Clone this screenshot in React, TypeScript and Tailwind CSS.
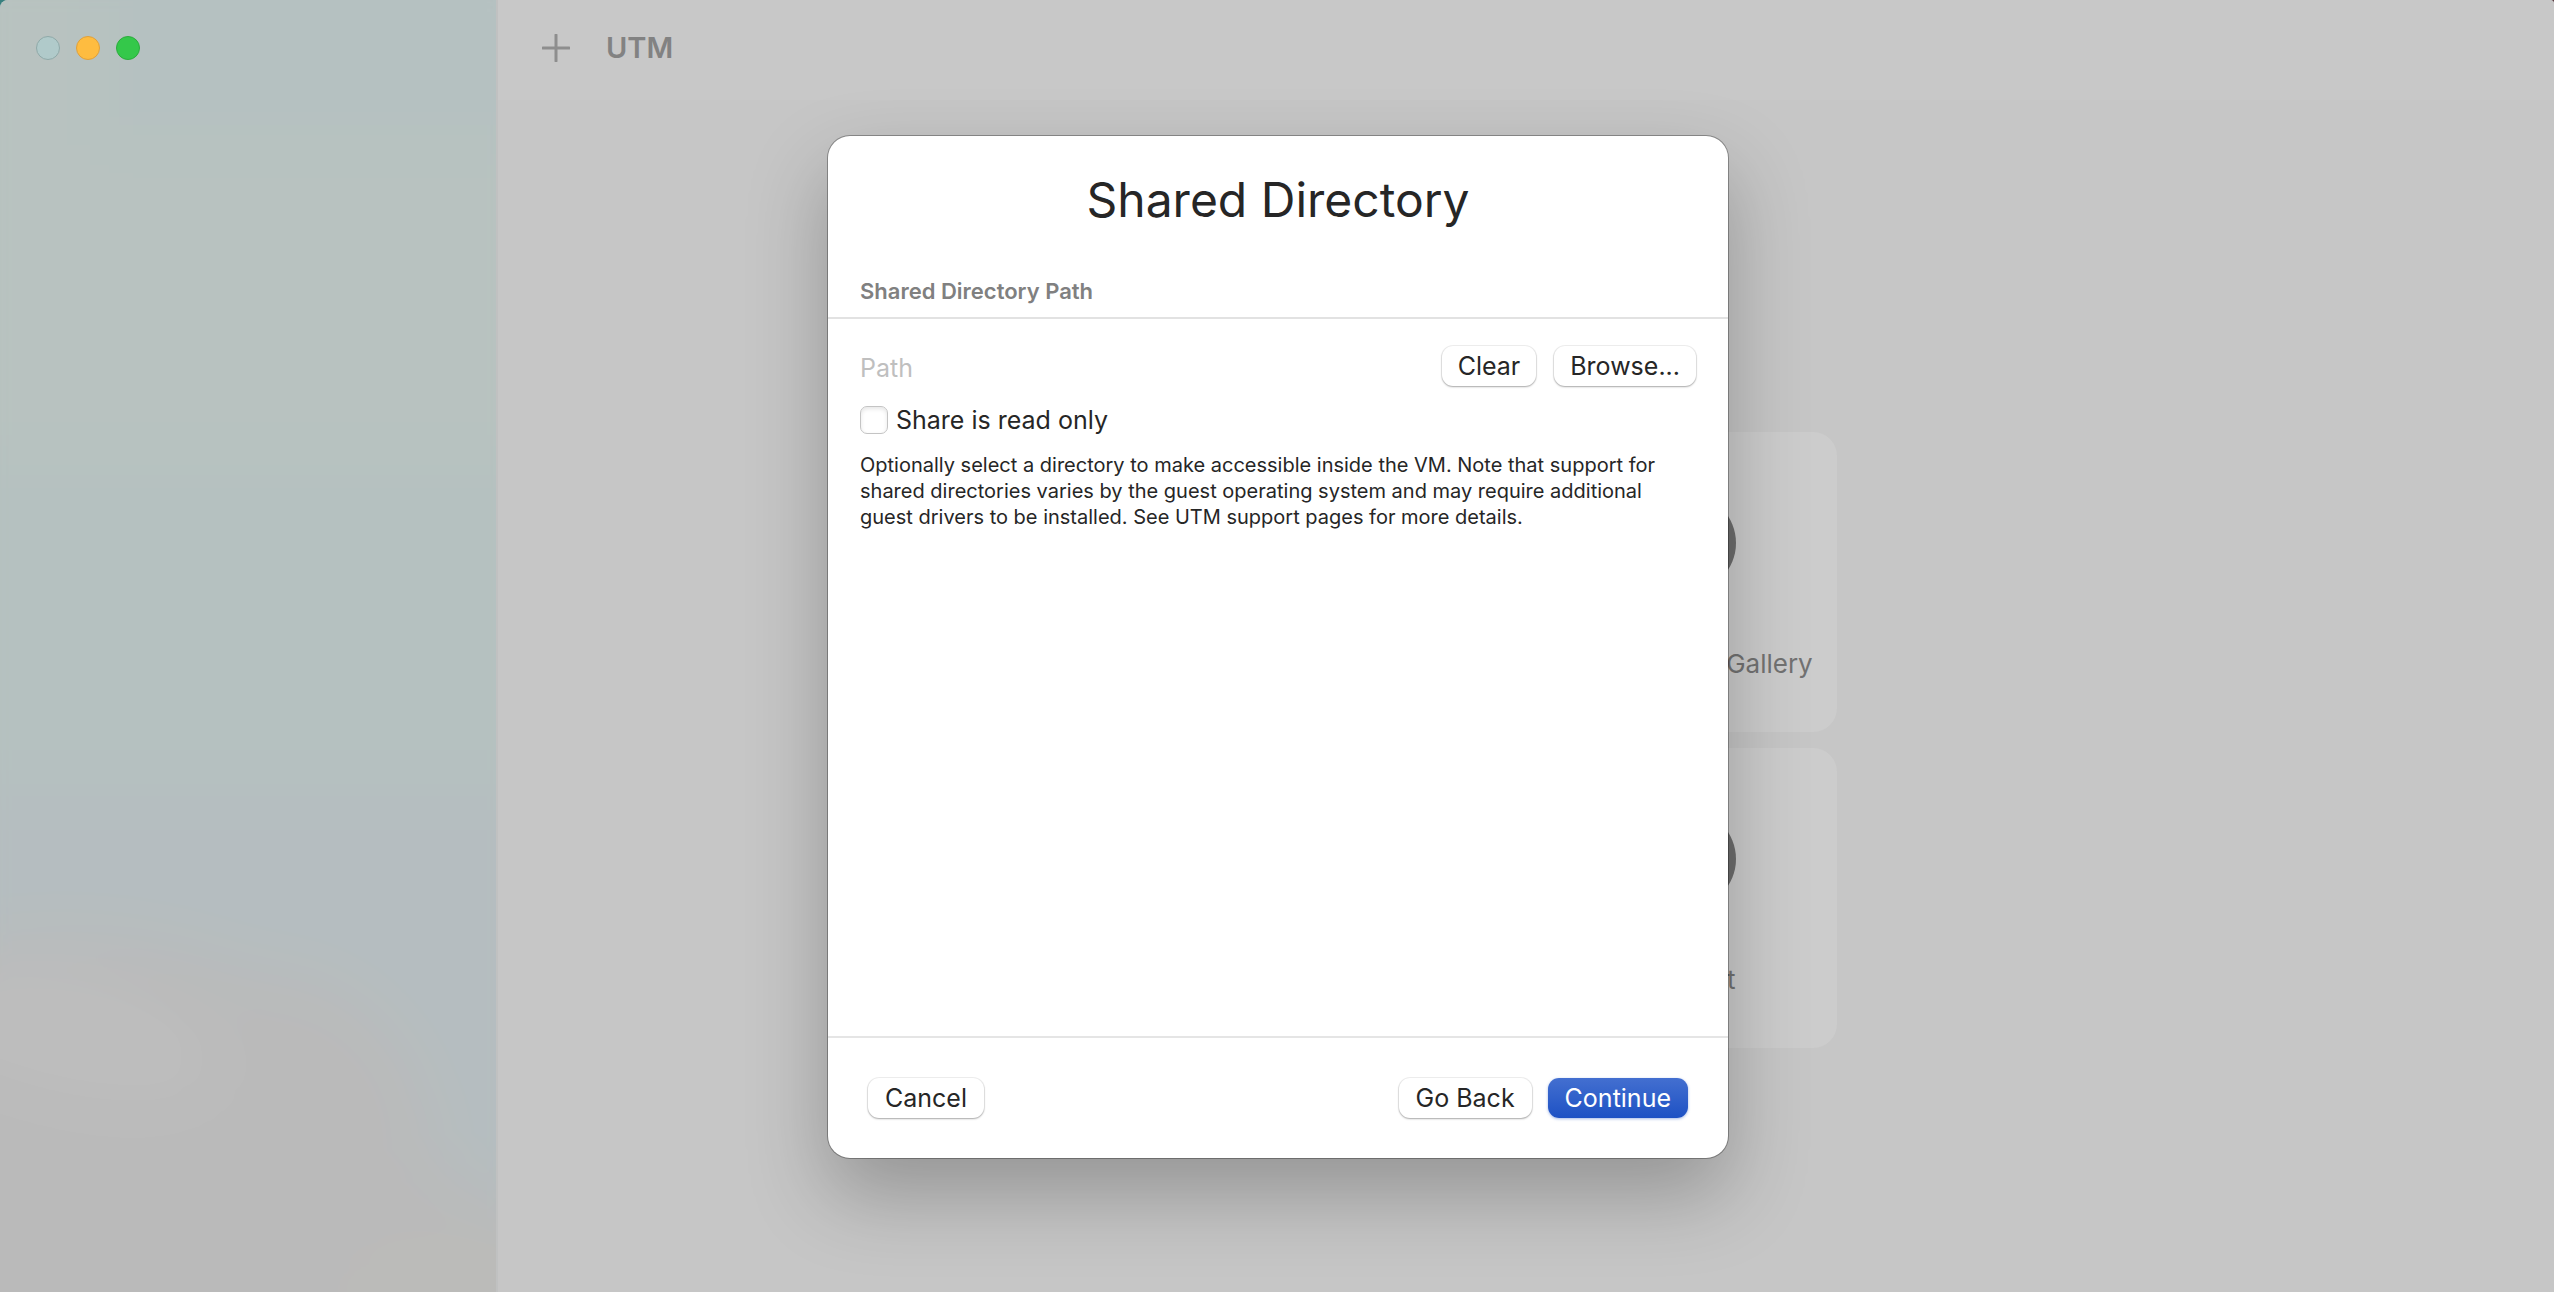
import type { ButtonHTMLAttributes, ReactNode } from 'react'
import clsx from 'clsx'

interface PushButtonProps extends ButtonHTMLAttributes<HTMLButtonElement> {
  primary?: boolean
}

function PushButton({ primary, className, ...props }: PushButtonProps) {
  return (
    <button
      type="button"
      className={clsx(
        'h-10 rounded-[11px] text-[25px] leading-9',
        primary
          ? 'bg-linear-to-b from-[#436fd0] to-[#1d51c4] text-white shadow-[0_1px_3px_rgba(29,81,196,0.4)]'
          : 'bg-white text-[#262626] shadow-[0_0_0_1px_rgba(0,0,0,0.06),0_1px_2px_rgba(0,0,0,0.3)]',
        className,
      )}
      {...props}
    />
  )
}

function Sidebar() {
  return (
    <aside className="relative w-[498px] shrink-0 overflow-hidden rounded-tl-lg border-r-2 border-[#c0c1c1] bg-[#b6c1c0]">
      {/* wallpaper showing through the translucent material */}
      <svg className="absolute inset-0 h-full w-full" viewBox="0 0 497 1292" preserveAspectRatio="none" aria-hidden="true">
        <defs>
          <filter id="soft" x="-50%" y="-50%" width="200%" height="200%">
            <feGaussianBlur stdDeviation="30" />
          </filter>
        </defs>
        <g filter="url(#soft)">
          <rect x="-60" y="-60" width="620" height="520" fill="#b8c2c0" />
          <rect x="100" y="-60" width="460" height="205" fill="#b5c1c1" />
          <rect x="-60" y="455" width="620" height="340" fill="#b5c1c0" />
          <rect x="-60" y="790" width="620" height="580" fill="#b5bdc0" />
          <path d="M-80 960C40 915 170 940 260 975C350 970 430 1050 430 1150C460 1190 520 1215 580 1220V1400H-80Z" fill="#bababa" />
          <path d="M-60 980C60 940 210 1000 220 1070C200 1120 60 1110 -60 1050Z" fill="#bdbdbd" />
          <ellipse cx="450" cy="1290" rx="100" ry="35" fill="#bcbbb8" />
        </g>
      </svg>
      <div className="relative flex gap-4 p-9">
        <button type="button" aria-label="Close" className="size-6 rounded-full border border-[#8fa9a8] bg-[#b0caca]" />
        <button type="button" aria-label="Minimize" className="size-6 rounded-full border border-[#dfa03b] bg-[#febc40]" />
        <button type="button" aria-label="Zoom" className="size-6 rounded-full border border-[#2bac3c] bg-[#34c84a]" />
      </div>
    </aside>
  )
}

function Tile({ icon, label }: { icon: ReactNode; label: string }) {
  return (
    <a href="#" className="col-start-2 flex h-[300px] flex-col items-center rounded-3xl bg-[#cccccc] pt-[62px] text-[#727272]">
      {icon}
      <span className="mt-14 text-[26px] leading-8 whitespace-nowrap">{label}</span>
    </a>
  )
}

function GalleryIcon() {
  return (
    <svg className="size-[98px]" viewBox="0 0 98 98" aria-hidden="true">
      <circle cx="49" cy="49" r="49" fill="#6d6d6d" />
      <path d="M18 49h40M49 18v62" stroke="#cccccc" strokeWidth="5" />
    </svg>
  )
}

function SupportIcon() {
  return (
    <svg className="size-[98px]" viewBox="0 0 98 98" aria-hidden="true">
      <circle cx="49" cy="49" r="49" fill="#6d6d6d" />
      <circle cx="49" cy="49" r="18" fill="#cccccc" />
    </svg>
  )
}

function SharedDirectoryDialog() {
  return (
    <div
      role="dialog"
      aria-labelledby="dialog-title"
      className="flex w-full max-w-[900px] flex-col rounded-[22px] bg-white text-[#262626] shadow-[0_0_0_1px_rgba(0,0,0,0.3),0_36px_80px_rgba(0,0,0,0.25)]"
    >
      <h1 id="dialog-title" className="pt-8 text-center text-[48px] leading-16">
        Shared Directory
      </h1>
      <h2 className="mt-[45px] border-b-2 border-[#e2e2e2] px-8 pb-3 text-[22px] leading-7 font-semibold text-[#808080]">
        Shared Directory Path
      </h2>
      <div className="min-h-[717px] px-8 pt-[27px]">
        <div className="flex items-center gap-[18px]">
          <input
            type="text"
            aria-label="Path"
            placeholder="Path"
            className="min-w-0 flex-1 pt-1 text-[25px] leading-8 outline-none placeholder:text-[#bfbfbf]"
          />
          <PushButton className="px-4">Clear</PushButton>
          <PushButton className="px-4">Browse...</PushButton>
        </div>
        <div className="mt-[18px] flex items-center gap-2">
          <input
            id="read-only"
            type="checkbox"
            className="size-7 appearance-none rounded-[7px] border border-[#c4c4c4] shadow-[inset_0_2px_4px_rgba(0,0,0,0.1)]"
          />
          <label htmlFor="read-only" className="text-[25px] leading-8">
            Share is read only
          </label>
        </div>
        <p className="mt-4 text-[20px] leading-[26px]">
          Optionally select a directory to make accessible inside the VM. Note that support for shared directories varies by the guest operating system and may require additional guest drivers to be installed. See UTM support pages for more details.
        </p>
      </div>
      <div className="flex gap-4 border-t-2 border-[#e5e5e5] p-10">
        <PushButton className="mr-auto px-[17px]">Cancel</PushButton>
        <PushButton className="px-[17px]">Go Back</PushButton>
        <PushButton primary className="px-[17px]">Continue</PushButton>
      </div>
    </div>
  )
}

export default function App() {
  return (
    <div className="relative flex min-h-screen bg-linear-to-r from-[#38807f] to-[#5a3a40] font-[Inter,'Liberation_Sans',sans-serif]">
      <Sidebar />
      <main className="flex-1 overflow-hidden rounded-tr-sm bg-[#c6c6c6]">
        <header className="flex h-[100px] items-center gap-9 bg-[#c8c8c8] pb-1 pl-11">
          <button type="button" aria-label="New">
            <svg className="size-7" viewBox="0 0 28 28" fill="none" stroke="#8e8e8e" strokeWidth="3" strokeLinecap="round" aria-hidden="true">
              <path d="M14 1v26M1 14h26" />
            </svg>
          </button>
          <span className="text-[29px] leading-9 font-semibold text-[#828282]">UTM</span>
        </header>
        <div className="mx-auto grid max-w-[622px] grid-cols-2 gap-x-5 gap-y-4 pt-[332px]">
          <Tile icon={<GalleryIcon />} label="Browse UTM Gallery" />
          <Tile icon={<SupportIcon />} label="Support" />
        </div>
      </main>
      <div className="absolute inset-0 flex items-center justify-center pt-0.5 pl-0.5">
        <SharedDirectoryDialog />
      </div>
    </div>
  )
}
